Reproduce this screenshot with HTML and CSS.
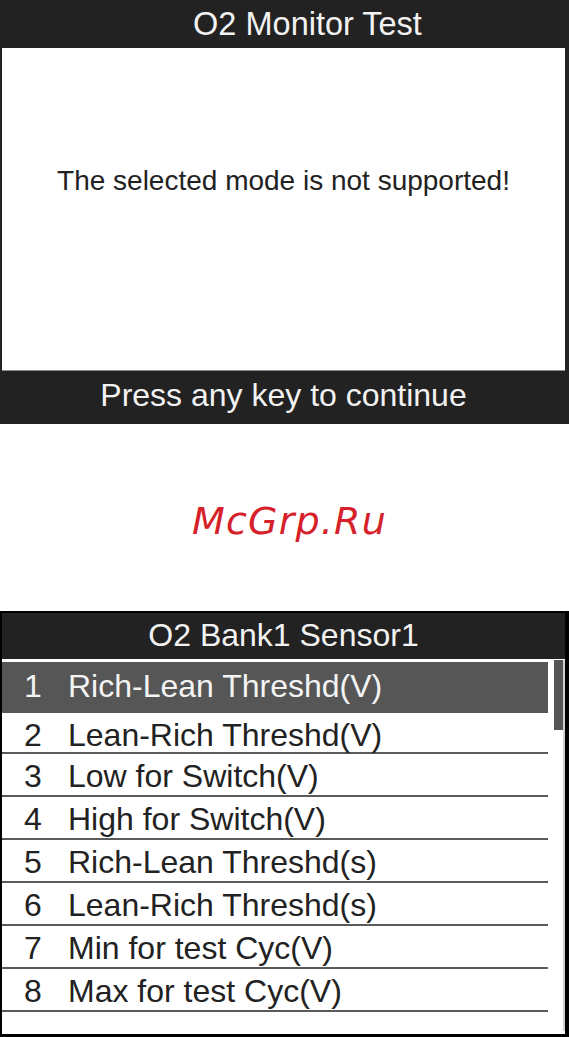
FILE: index.html
```html
<!DOCTYPE html>
<html>
<head>
<meta charset="utf-8">
<link rel="stylesheet" href="styles.css">
</head>
<body>
<div class="screen s1">
  <div class="bar title">O2 Monitor Test</div>
  <div class="msg">The selected mode is not supported!</div>
  <div class="bar footer">Press any key to continue</div>
</div>
<div class="watermark">McGrp.Ru</div>
<div class="screen s2">
  <div class="bar title2">O2 Bank1 Sensor1</div>
  <div class="list">
    <ul class="rows">
      <li class="row sel"><span class="num">1</span><span class="txt">Rich-Lean Threshd(V)</span></li>
      <li class="row first"><span class="num">2</span><span class="txt">Lean-Rich Threshd(V)</span></li>
      <li class="row"><span class="num">3</span><span class="txt">Low for Switch(V)</span></li>
      <li class="row"><span class="num">4</span><span class="txt">High for Switch(V)</span></li>
      <li class="row"><span class="num">5</span><span class="txt">Rich-Lean Threshd(s)</span></li>
      <li class="row"><span class="num">6</span><span class="txt">Lean-Rich Threshd(s)</span></li>
      <li class="row"><span class="num">7</span><span class="txt">Min for test Cyc(V)</span></li>
      <li class="row"><span class="num">8</span><span class="txt">Max for test Cyc(V)</span></li>
    </ul>
    <div class="track"><div class="thumb"></div></div>
  </div>
</div>
</body>
</html>
```

FILE: styles.css
```css
* { box-sizing: border-box; }
html, body { margin: 0; padding: 0; background: #fff; }
body {
  width: 569px;
  font-family: "Liberation Sans", Arial, sans-serif;
}
.screen { width: 569px; }
.s1 {
  height: 424px;
  background: #222;
  padding: 0 4px 0 2px;
  display: flex;
  flex-direction: column;
}
.bar {
  color: #f2f2f2;
  display: flex;
  align-items: center;
  justify-content: center;
  font-size: 32px;
}
.title { height: 48px; padding-left: 48px; padding-top: 1px; font-size: 32.5px; }
.msg {
  flex: 1;
  background: #fff;
  color: #222;
  font-size: 28px;
  display: flex;
  justify-content: center;
  padding-top: 117px;
  border-bottom: 1px solid #888;
}
.footer { height: 53px; font-size: 32px; padding-bottom: 4px; }
.watermark {
  height: 187px;
  display: flex;
  align-items: center;
  justify-content: center;
  padding-left: 10px;
  padding-top: 6px;
  font-family: "DejaVu Sans", sans-serif;
  font-style: italic;
  font-size: 38px;
  letter-spacing: 1.2px;
  color: #d6212a;
}
.s2 {
  height: 426px;
  border: 2px solid #000;
  border-right-width: 4px;
  border-bottom-width: 3px;
  display: flex;
  flex-direction: column;
}
.title2 { height: 46px; background: #222; font-size: 32px; padding-bottom: 2px; }
.list {
  flex: 1;
  position: relative;
  padding-top: 3px;
}
.rows {
  list-style: none;
  margin: 0;
  padding: 0;
  width: 546px;
}
.row {
  height: 43px;
  display: flex;
  align-items: center;
  border-bottom: 2px solid #5a5a5a;
  color: #222;
  font-size: 32px;
  padding-top: 3px;
}
.row.first { height: 41px; padding-top: 5px; }
.row.sel {
  height: 51px;
  background: #565656;
  color: #f4f4f4;
  border-bottom: none;
  padding-top: 0;
  padding-bottom: 2px;
}
.num { width: 66px; padding-left: 22px; }
.txt { white-space: nowrap; }
.track {
  position: absolute;
  top: 1px;
  right: 0;
  width: 13px;
  height: 371px;
  border-right: 2px solid #d0d0d0;
}
.thumb {
  position: absolute;
  top: 0;
  left: 2px;
  width: 9px;
  height: 70px;
  background: #555;
}
```
